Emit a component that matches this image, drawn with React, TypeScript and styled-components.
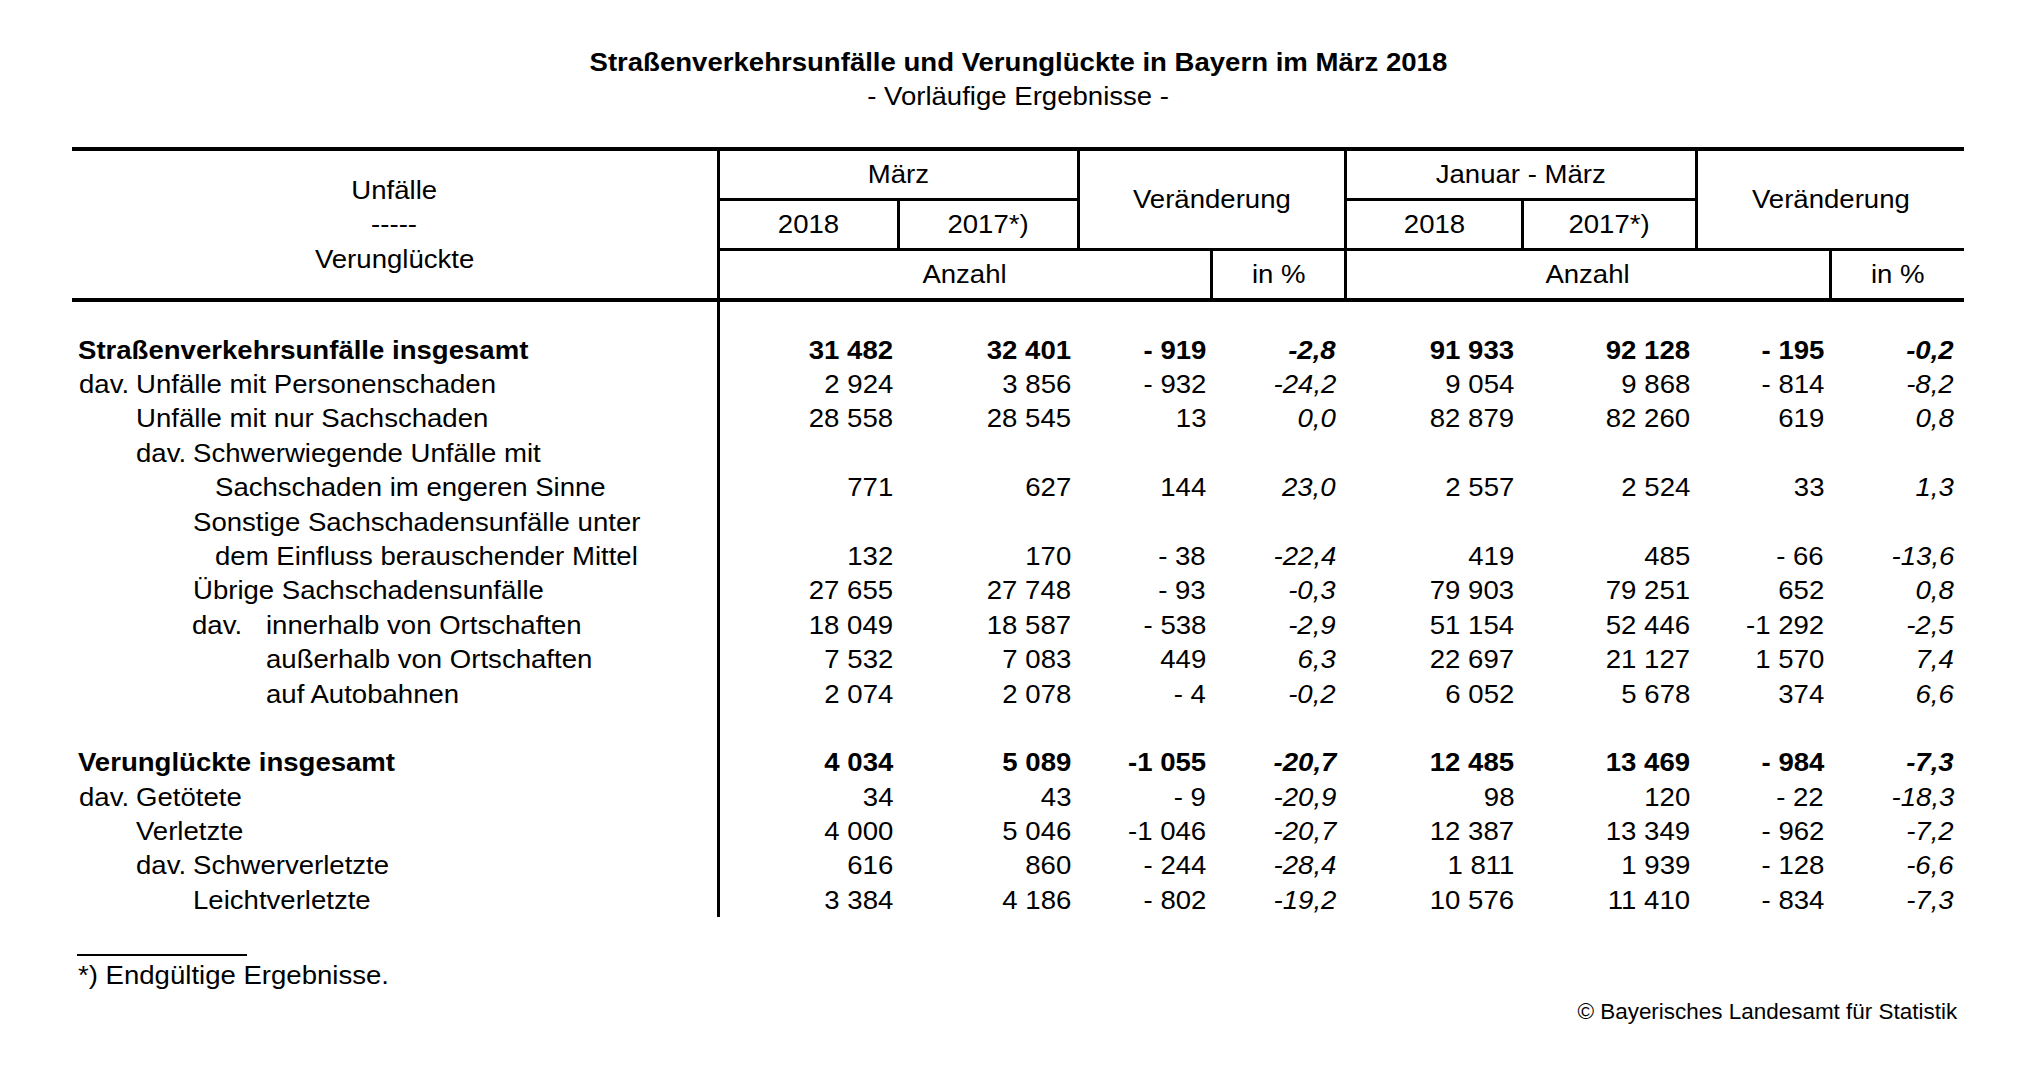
import React from 'react';
import styled, { createGlobalStyle } from 'styled-components';

const SX = 1.04;
const FS = 26.5;
const COLS = '645px 180px 180px 133px 134px 177px 174px 134px 135px';
const PADS = [4, 6, 4, 8, 7, 5, 5, 10];
const LH = 34.4;

const Global = createGlobalStyle`
  *, *::before, *::after { box-sizing: border-box; }
  html, body { margin: 0; padding: 0; background: #fff; }
  body {
    font-family: "Liberation Sans", Arial, Helvetica, sans-serif;
    color: #000;
    font-size: ${FS}px;
  }
`;

const Page = styled.div`
  width: 1892px;
  margin-left: 72px;
  padding-top: 45px;
`;

const Txt = styled.span<{ $o?: 'left' | 'right' | 'center' }>`
  display: inline-block;
  white-space: pre;
  transform: scaleX(${SX});
  transform-origin: ${(p) => p.$o ?? 'left'} center;
`;

const Title = styled.h1`
  margin: 0;
  font-size: ${FS}px;
  font-weight: 700;
  line-height: ${LH}px;
  text-align: center;
`;

const Subtitle = styled.div`
  line-height: ${LH}px;
  text-align: center;
`;

const Table = styled.div`
  margin-top: 33px;
`;

const Head = styled.div`
  display: grid;
  grid-template-columns: ${COLS};
  grid-template-rows: 50px 50px 47px;
  border-top: 4px solid #000;
  border-bottom: 4px solid #000;
`;

const HCell = styled.div<{ $col: string; $row: string; $left?: boolean; $bottom?: boolean }>`
  grid-column: ${(p) => p.$col};
  grid-row: ${(p) => p.$row};
  display: flex;
  align-items: center;
  justify-content: center;
  line-height: ${LH}px;
  border-left: ${(p) => (p.$left ? '3px solid #000' : 'none')};
  border-bottom: ${(p) => (p.$bottom ? '3px solid #000' : 'none')};
`;

const HLabel = styled(HCell)`
  flex-direction: column;
`;

const Row = styled.div<{ $h?: number }>`
  display: grid;
  grid-template-columns: ${COLS};
  height: ${(p) => p.$h ?? LH}px;
  line-height: ${LH}px;
`;

const Label = styled.div<{ $indent: number; $bold?: boolean }>`
  display: flex;
  padding-left: ${(p) => p.$indent}px;
  font-weight: ${(p) => (p.$bold ? 700 : 400)};
  white-space: nowrap;
`;

const Prefix = styled.span<{ $w: number }>`
  display: inline-block;
  flex: none;
  width: ${(p) => p.$w}px;
`;

const Val = styled.div<{ $pad: number; $first?: boolean; $pct?: boolean; $bold?: boolean }>`
  text-align: right;
  padding-right: ${(p) => p.$pad}px;
  border-left: ${(p) => (p.$first ? '3px solid #000' : 'none')};
  font-style: ${(p) => (p.$pct ? 'italic' : 'normal')};
  font-weight: ${(p) => (p.$bold ? 700 : 400)};
  white-space: nowrap;
`;

const Rule = styled.div`
  margin-top: 37px;
  margin-left: 5px;
  width: 170px;
  height: 2px;
  background: #000;
`;

const Note = styled.div`
  margin-top: 2px;
  padding-left: 6px;
  line-height: ${LH}px;
`;

const Credit = styled.div`
  margin-top: 2px;
  padding-right: 7px;
  text-align: right;
  font-size: 21.6px;
  line-height: ${LH}px;
`;

type RowData = {
  indent: number;
  text: string;
  prefix?: string;
  prefixW?: number;
  bold?: boolean;
  v: string[];
};

const E = ['', '', '', '', '', '', '', ''];

const rows: (RowData | null)[] = [
  { indent: 6, text: 'Straßenverkehrsunfälle insgesamt', bold: true, v: ['31 482', '32 401', '- 919', '-2,8', '91 933', '92 128', '- 195', '-0,2'] },
  { indent: 7, prefix: 'dav.', prefixW: 57, text: 'Unfälle mit Personenschaden', v: ['2 924', '3 856', '- 932', '-24,2', '9 054', '9 868', '- 814', '-8,2'] },
  { indent: 64, text: 'Unfälle mit nur Sachschaden', v: ['28 558', '28 545', '13', '0,0', '82 879', '82 260', '619', '0,8'] },
  { indent: 64, prefix: 'dav.', prefixW: 57, text: 'Schwerwiegende Unfälle mit', v: E },
  { indent: 143, text: 'Sachschaden im engeren Sinne', v: ['771', '627', '144', '23,0', '2 557', '2 524', '33', '1,3'] },
  { indent: 121, text: 'Sonstige Sachschadensunfälle unter', v: E },
  { indent: 143, text: 'dem Einfluss berauschender Mittel', v: ['132', '170', '- 38', '-22,4', '419', '485', '- 66', '-13,6'] },
  { indent: 121, text: 'Übrige Sachschadensunfälle', v: ['27 655', '27 748', '- 93', '-0,3', '79 903', '79 251', '652', '0,8'] },
  { indent: 120, prefix: 'dav.', prefixW: 74, text: 'innerhalb von Ortschaften', v: ['18 049', '18 587', '- 538', '-2,9', '51 154', '52 446', '-1 292', '-2,5'] },
  { indent: 194, text: 'außerhalb von Ortschaften', v: ['7 532', '7 083', '449', '6,3', '22 697', '21 127', '1 570', '7,4'] },
  { indent: 194, text: 'auf Autobahnen', v: ['2 074', '2 078', '- 4', '-0,2', '6 052', '5 678', '374', '6,6'] },
  null,
  { indent: 6, text: 'Verunglückte insgesamt', bold: true, v: ['4 034', '5 089', '-1 055', '-20,7', '12 485', '13 469', '- 984', '-7,3'] },
  { indent: 7, prefix: 'dav.', prefixW: 57, text: 'Getötete', v: ['34', '43', '- 9', '-20,9', '98', '120', '- 22', '-18,3'] },
  { indent: 64, text: 'Verletzte', v: ['4 000', '5 046', '-1 046', '-20,7', '12 387', '13 349', '- 962', '-7,2'] },
  { indent: 64, prefix: 'dav.', prefixW: 57, text: 'Schwerverletzte', v: ['616', '860', '- 244', '-28,4', '1 811', '1 939', '- 128', '-6,6'] },
  { indent: 121, text: 'Leichtverletzte', v: ['3 384', '4 186', '- 802', '-19,2', '10 576', '11 410', '- 834', '-7,3'] },
];

const Values: React.FC<{ v: string[]; bold?: boolean }> = ({ v, bold }) => (
  <>
    {v.map((x, i) => (
      <Val key={i} $pad={PADS[i]} $first={i === 0} $pct={i === 3 || i === 7} $bold={bold}>
        {x ? <Txt $o="right">{x}</Txt> : null}
      </Val>
    ))}
  </>
);

export default function App() {
  return (
    <>
      <Global />
      <Page>
        <Title>
          <Txt $o="center">Straßenverkehrsunfälle und Verunglückte in Bayern im März 2018</Txt>
        </Title>
        <Subtitle>
          <Txt $o="center">- Vorläufige Ergebnisse -</Txt>
        </Subtitle>
        <Table>
          <Head>
            <HLabel $col="1" $row="1 / 4">
              <Txt $o="center">Unfälle</Txt>
              <Txt $o="center">-----</Txt>
              <Txt $o="center">Verunglückte</Txt>
            </HLabel>
            <HCell $col="2 / 4" $row="1" $left $bottom>
              <Txt $o="center">März</Txt>
            </HCell>
            <HCell $col="4 / 6" $row="1 / 3" $left $bottom>
              <Txt $o="center">Veränderung</Txt>
            </HCell>
            <HCell $col="6 / 8" $row="1" $left $bottom>
              <Txt $o="center">Januar - März</Txt>
            </HCell>
            <HCell $col="8 / 10" $row="1 / 3" $left $bottom>
              <Txt $o="center">Veränderung</Txt>
            </HCell>
            <HCell $col="2" $row="2" $left $bottom>
              <Txt $o="center">2018</Txt>
            </HCell>
            <HCell $col="3" $row="2" $left $bottom>
              <Txt $o="center">2017*)</Txt>
            </HCell>
            <HCell $col="6" $row="2" $left $bottom>
              <Txt $o="center">2018</Txt>
            </HCell>
            <HCell $col="7" $row="2" $left $bottom>
              <Txt $o="center">2017*)</Txt>
            </HCell>
            <HCell $col="2 / 5" $row="3" $left>
              <Txt $o="center">Anzahl</Txt>
            </HCell>
            <HCell $col="5" $row="3" $left>
              <Txt $o="center">in %</Txt>
            </HCell>
            <HCell $col="6 / 9" $row="3" $left>
              <Txt $o="center">Anzahl</Txt>
            </HCell>
            <HCell $col="9" $row="3" $left>
              <Txt $o="center">in %</Txt>
            </HCell>
          </Head>
          <Row $h={30.8}>
            <Label $indent={0} />
            <Values v={E} />
          </Row>
          {rows.map((r, i) =>
            r ? (
              <Row key={i}>
                <Label $indent={r.indent} $bold={r.bold}>
                  {r.prefix ? (
                    <Prefix $w={r.prefixW ?? 57}>
                      <Txt>{r.prefix}</Txt>
                    </Prefix>
                  ) : null}
                  <Txt>{r.text}</Txt>
                </Label>
                <Values v={r.v} bold={r.bold} />
              </Row>
            ) : (
              <Row key={i}>
                <Label $indent={0} />
                <Values v={E} />
              </Row>
            )
          )}
        </Table>
        <Rule />
        <Note>
          <Txt>*) Endgültige Ergebnisse.</Txt>
        </Note>
        <Credit>
          <Txt $o="right">© Bayerisches Landesamt für Statistik</Txt>
        </Credit>
      </Page>
    </>
  );
}
